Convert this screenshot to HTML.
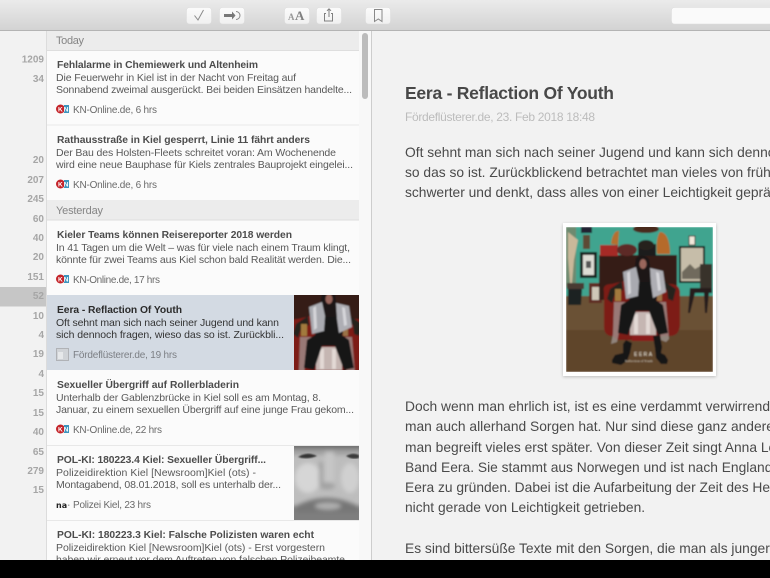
<!DOCTYPE html>
<html><head><meta charset="utf-8"><style>
html,body{margin:0;padding:0;width:770px;height:578px;overflow:hidden;background:#000}
svg{display:block}
text{font-family:"Liberation Sans",sans-serif;white-space:pre}
.n{font-size:10px;font-weight:bold;fill:#a6a6a6;text-anchor:end}
.h{font-size:11px;fill:#858585}
.t{font-size:10.300px;font-weight:bold;fill:#4c4c4c}
.d{font-size:10.500px;fill:#595959}
.s{font-size:10px;fill:#6a6a6a}
.b{font-size:13.800px;fill:#4a4a4a}
</style></head><body>
<svg width="770" height="578" viewBox="0 0 770 578" xmlns="http://www.w3.org/2000/svg">
<defs>
<linearGradient id="tb" x1="0" y1="0" x2="0" y2="1"><stop offset="0" stop-color="#ebebeb"/><stop offset="1" stop-color="#d3d3d3"/></linearGradient>
<linearGradient id="btn" x1="0" y1="0" x2="0" y2="1"><stop offset="0" stop-color="#fbfbfb"/><stop offset="1" stop-color="#f0f0f0"/></linearGradient>
<filter id="soft" x="-5%" y="-5%" width="110%" height="110%"><feGaussianBlur stdDeviation="0.8"/></filter>
<filter id="soft3" x="-30%" y="-30%" width="160%" height="160%"><feGaussianBlur stdDeviation="2"/></filter>
<filter id="sh" x="-10%" y="-10%" width="120%" height="120%"><feGaussianBlur stdDeviation="1.5"/></filter>
<clipPath id="c1"><rect x="294" y="295" width="65" height="75"/></clipPath>
<clipPath id="c2"><rect x="294" y="446" width="65" height="74"/></clipPath>
<clipPath id="c3"><rect x="566" y="227" width="147" height="145"/></clipPath>
<g id="album" filter="url(#soft)">
 <rect x="566" y="227" width="147" height="72" fill="#3fa48f"/>
 <rect x="566" y="296" width="147" height="76" fill="#6a5136"/>
 <rect x="566" y="330" width="147" height="42" fill="#5e452c"/>
 <rect x="566" y="227" width="10" height="60" fill="#6d8a70"/>
 <path d="M568 232 L578 240 L574 260 L572 283 L570 283 L568 258Z" fill="#c9b89a"/>
 <rect x="567" y="283" width="17" height="6" fill="#4a3b30"/>
 <path d="M568 289h14l-1 16h-13z" fill="#1c2421"/>
 <rect x="580" y="252" width="17" height="26" fill="#14201d"/><rect x="583" y="255" width="11" height="20" fill="#dcdcd4"/><rect x="586" y="261" width="5" height="7" fill="#555"/>
 <rect x="581" y="227" width="11" height="6" fill="#223"/>
 <rect x="583" y="235" width="7" height="14" fill="#5d4a35"/>
 <rect x="589" y="283" width="13" height="20" fill="#5f2a22"/><rect x="592" y="287" width="8" height="13" fill="#cfc7b8"/>
 <rect x="599" y="255" width="78" height="45" fill="#341a14"/>
 <rect x="600" y="245" width="18" height="11" fill="#a52a26"/>
 <ellipse cx="627" cy="250" rx="10" ry="6" fill="#5d2a25"/>
 <rect x="638" y="244" width="18" height="12" fill="#1e1d1b"/><ellipse cx="646" cy="245" rx="8" ry="5" fill="#26241f"/>
 <path d="M611 244c1-10 5-14 8-13l-1 14z" fill="#b5702e"/>
 <path d="M660 232c6 0 10 8 10 22h-13c-1-10 0-18 3-22z" fill="#b56a2c"/>
 <ellipse cx="646" cy="229" rx="13" ry="4" fill="#49291f"/>
 <rect x="689" y="236" width="6" height="9" fill="#f0e8da" stroke="#3b2a22"/>
 <rect x="679" y="246" width="26" height="37" fill="#18211e"/><rect x="681" y="248" width="22" height="33" fill="#c6bda9"/><path d="M682 272l8-8 5 5 7-4v14h-20z" fill="#6f6a5d"/>
 <path d="M690 288h22v5h-3l-2 20h-2l-1-20h-9l-5 20h-2z" fill="#261f1d"/>
 <rect x="700" y="264" width="12" height="24" fill="#39302a"/>
 <path d="M604 292q-2-8 8-8l12-3h30l16 3q10 0 10 9v30q0 13-10 13h-8l-4 4h-40l-6-4q-8 0-8-10z" fill="#7d1a18"/>
 <path d="M614 302l-1 32 -2 10 6-2 6-30 6-3h22l6 3 4 28 5 2 3-3-3-37z" fill="#a39a96" opacity=".75"/>
 <rect x="630" y="312" width="26" height="23" fill="#c5b6b2"/>
 <rect x="634" y="314" width="4" height="20" fill="#e2d8d4"/><rect x="646" y="314" width="4" height="20" fill="#e2d8d4"/>
 <rect x="632" y="335" width="24" height="6" fill="#8a1f1c"/>
 <path d="M622 281l-12 8 -3 10 5 4 3-9 8-4z" fill="#25201f"/>
 <path d="M664 281l12 8 -3 12 -5-2 -1-9-6-3z" fill="#25201f"/>
 <rect x="615" y="289" width="6" height="12" fill="#a27a3e"/><rect x="657" y="291" width="5" height="10" fill="#9a7246"/>
 <path d="M634 276h18l5 22 -1 2 7 5 5 28-10 2-9-24h-13l-8 24-10-2 3-28 8-5z" fill="#141212"/>
 <path d="M636 258q7-5 13 1l2 15-2 8h-12l-3-8z" fill="#1a1615"/>
 <ellipse cx="643" cy="264" rx="3.500" ry="5" fill="#9a665c"/>
 <path d="M623 272l13-5 3 14-1 15-12 3z" fill="#a9aab0"/>
 <path d="M627 273l3-2 1 22-3 2z" fill="#d4d4d8"/>
 <path d="M650 268l13 3 3 21-13 6-2-14z" fill="#aeaeb4"/>
 <path d="M656 272l3 1 2 17-3 1z" fill="#d6d6da"/>
 <path d="M626 340l-3 4v9l-8 2 -3 5v3l9 2 6-4 3-8 2-10z" fill="#131212"/>
 <path d="M660 335l2 12 -1 6 4 2 3 5 -1 4 -6 0 -5-6 -1-10-2-12z" fill="#131212"/>
 <text x="634" y="356" fill="#e8e0d0" style="font-size:5px;letter-spacing:1.5px">EERA</text>
 <text x="625" y="362" fill="#d8d0c0" style="font-size:3.500px;font-family:'Liberation Serif',serif">Reflection of Youth</text>
</g>
</defs>

<!-- base -->
<rect width="770" height="578" fill="#f2f2f2"/>
<!-- toolbar -->
<rect width="770" height="30" fill="url(#tb)"/>
<rect y="30" width="770" height="1" fill="#b4b4b4"/>
<g fill="url(#btn)" stroke="#dcdcdc" stroke-width=".5">
<rect x="186.500" y="7.500" width="25" height="16.500" rx="3"/>
<rect x="219.500" y="7.500" width="25" height="16.500" rx="3"/>
<rect x="284.500" y="7.500" width="25" height="16.500" rx="3"/>
<rect x="316.500" y="7.500" width="25" height="16.500" rx="3"/>
<rect x="365.500" y="7.500" width="25" height="16.500" rx="3"/>
<rect x="671.500" y="7.500" width="104" height="16.500" rx="3" fill="#fafafa"/>
</g>
<path d="M194.500 15.500l3.500 4.500 5.500-10" fill="none" stroke="#8a8a8a" stroke-width="1"/>
<path d="M224 14h8v-2.500l3.500 4 -3.500 4V17h-8z" fill="#777"/><path d="M236 11.500a4 4 0 0 1 0 8" fill="none" stroke="#8a8a8a" stroke-width="1"/>
<text x="288" y="20" style="font-size:9px;font-family:'Liberation Serif',serif;font-weight:bold" fill="#999">A</text>
<text x="295" y="20" style="font-size:13px;font-family:'Liberation Serif',serif;font-weight:bold" fill="#808080">A</text>
<path d="M326 13.500h-1.500v7.500h8v-7.500H331M329 17V9M327 10.800l2-2 2 2" fill="none" stroke="#808080" stroke-width="1"/>
<path d="M374.500 9.500h7.500v12l-3.700-2.500-3.800 2.500z" fill="none" stroke="#888" stroke-width="1"/>

<!-- sidebar -->
<rect y="31" width="47" height="529" fill="#f2f2f2"/>
<rect y="287" width="46" height="19.500" fill="#c6c6c6"/>
<g>
<text class="n" x="44" y="62.500">1209</text><text class="n" x="44" y="82">34</text>
<text class="n" x="44" y="163">20</text><text class="n" x="44" y="183">207</text><text class="n" x="44" y="202">245</text>
<text class="n" x="44" y="222">60</text><text class="n" x="44" y="241">40</text><text class="n" x="44" y="260">20</text>
<text class="n" x="44" y="280">151</text><text class="n" x="44" y="299">52</text><text class="n" x="44" y="319">10</text>
<text class="n" x="44" y="338">4</text><text class="n" x="44" y="357">19</text><text class="n" x="44" y="377">4</text>
<text class="n" x="44" y="396">15</text><text class="n" x="44" y="416">15</text><text class="n" x="44" y="435">40</text>
<text class="n" x="44" y="455">65</text><text class="n" x="44" y="474">279</text><text class="n" x="44" y="493">15</text>
</g>

<!-- list -->
<rect x="46" y="31" width="1" height="529" fill="#dcdcdc"/>
<rect x="47" y="31" width="324" height="529" fill="#fbfbfb"/>
<rect x="359" y="31" width="12" height="529" fill="#f8f8f8"/>
<rect x="371" y="31" width="1" height="529" fill="#cdcdcd"/>
<rect x="362" y="33" width="6" height="66" rx="3" fill="#bcbcbc"/>

<rect x="47" y="31" width="312" height="19" fill="#ececec"/>
<rect x="47" y="50" width="312" height="1" fill="#dedede"/>
<text class="h" x="56" y="44" textLength="28">Today</text>
<rect x="47" y="200" width="312" height="19.500" fill="#ececec"/>
<rect x="47" y="219.500" width="312" height="1" fill="#dedede"/>
<text class="h" x="56" y="214" textLength="47">Yesterday</text>
<rect x="47" y="124.500" width="312" height="1" fill="#e8e8e8"/>
<rect x="47" y="445" width="312" height="1" fill="#e8e8e8"/>
<rect x="47" y="520" width="312" height="1" fill="#e8e8e8"/>
<rect x="47" y="295" width="312" height="75" fill="#d3dae3"/>

<text class="t" x="57" y="68" textLength="201">Fehlalarme in Chemiewerk und Altenheim</text>
<text class="d" x="56" y="81" textLength="240">Die Feuerwehr in Kiel ist in der Nacht von Freitag auf</text>
<text class="d" x="56" y="93" textLength="296">Sonnabend zweimal ausgerückt. Bei beiden Einsätzen handelte...</text>
<text class="s" x="73" y="113" textLength="84">KN-Online.de, 6 hrs</text>

<text class="t" x="57" y="143" textLength="253">Rathausstraße in Kiel gesperrt, Linie 11 fährt anders</text>
<text class="d" x="56" y="156" textLength="280">Der Bau des Holsten-Fleets schreitet voran: Am Wochenende</text>
<text class="d" x="56" y="168" textLength="297">wird eine neue Bauphase für Kiels zentrales Bauprojekt eingelei...</text>
<text class="s" x="73" y="188" textLength="84">KN-Online.de, 6 hrs</text>

<text class="t" x="57" y="238" textLength="235">Kieler Teams können Reisereporter 2018 werden</text>
<text class="d" x="56" y="251" textLength="294">In 41 Tagen um die Welt – was für viele nach einem Traum klingt,</text>
<text class="d" x="56" y="263" textLength="295">könnte für zwei Teams aus Kiel schon bald Realität werden. Die...</text>
<text class="s" x="73" y="283" textLength="87">KN-Online.de, 17 hrs</text>

<text class="t" x="57" y="313" textLength="125" style="fill:#2b2b2b">Eera - Reflaction Of Youth</text>
<text class="d" x="56" y="326" textLength="223" style="fill:#333">Oft sehnt man sich nach seiner Jugend und kann</text>
<text class="d" x="56" y="338" textLength="228" style="fill:#333">sich dennoch fragen, wieso das so ist. Zurückbli...</text>
<text class="s" x="73" y="358" textLength="104" style="fill:#7c7f84">Fördeflüsterer.de, 19 hrs</text>
<rect x="56.500" y="348.500" width="12" height="12" fill="#d0d3d7" stroke="#b0b2b6"/>
<rect x="58" y="352" width="5" height="7" fill="#e6e8ea"/>

<text class="t" x="57" y="388" textLength="182">Sexueller Übergriff auf Rollerbladerin</text>
<text class="d" x="56" y="401" textLength="265">Unterhalb der Gablenzbrücke in Kiel soll es am Montag, 8.</text>
<text class="d" x="56" y="413" textLength="298">Januar, zu einem sexuellen Übergriff auf eine junge Frau gekom...</text>
<text class="s" x="73" y="433" textLength="89">KN-Online.de, 22 hrs</text>

<text class="t" x="57" y="463" textLength="209">POL-KI: 180223.4 Kiel: Sexueller Übergriff...</text>
<text class="d" x="56" y="476" textLength="200">Polizeidirektion Kiel [Newsroom]Kiel (ots) -</text>
<text class="d" x="56" y="488" textLength="225">Montagabend, 08.01.2018, soll es unterhalb der...</text>
<text class="s" x="73" y="508" textLength="78">Polizei Kiel, 23 hrs</text>
<text x="56" y="508" style="font-size:8px;font-weight:bold;font-family:'DejaVu Sans',sans-serif" fill="#222">na<tspan fill="#aaa">·</tspan></text>

<text class="t" x="57" y="538" textLength="257">POL-KI: 180223.3 Kiel: Falsche Polizisten waren echt</text>
<text class="d" x="56" y="551" textLength="269">Polizeidirektion Kiel [Newsroom]Kiel (ots) - Erst vorgestern</text>
<text class="d" x="56" y="563" textLength="289">haben wir erneut vor dem Auftreten von falschen Polizeibeamte</text>

<!-- KN icons -->
<g style="font-size:6.500px;font-weight:bold">
<g><circle cx="60.500" cy="109" r="4.500" fill="#c4242a"/><rect x="64" y="105" width="5" height="8" fill="#3d94bd"/><text x="58" y="111.500" style="font-size:6.500px;font-weight:bold" fill="#fff">K</text><text x="63.800" y="111.500" style="font-size:6.500px;font-weight:bold" fill="#fff">N</text></g>
<g><circle cx="60.500" cy="184" r="4.500" fill="#c4242a"/><rect x="64" y="180" width="5" height="8" fill="#3d94bd"/><text x="58" y="186.500" style="font-size:6.500px;font-weight:bold" fill="#fff">K</text><text x="63.800" y="186.500" style="font-size:6.500px;font-weight:bold" fill="#fff">N</text></g>
<g><circle cx="60.500" cy="279" r="4.500" fill="#c4242a"/><rect x="64" y="275" width="5" height="8" fill="#3d94bd"/><text x="58" y="281.500" style="font-size:6.500px;font-weight:bold" fill="#fff">K</text><text x="63.800" y="281.500" style="font-size:6.500px;font-weight:bold" fill="#fff">N</text></g>
<g><circle cx="60.500" cy="429" r="4.500" fill="#c4242a"/><rect x="64" y="425" width="5" height="8" fill="#3d94bd"/><text x="58" y="431.500" style="font-size:6.500px;font-weight:bold" fill="#fff">K</text><text x="63.800" y="431.500" style="font-size:6.500px;font-weight:bold" fill="#fff">N</text></g>
</g>

<!-- thumb 1 -->
<g clip-path="url(#c1)"><rect x="294" y="295" width="65" height="75" fill="#6b1f1a"/><use href="#album" transform="translate(-314 35)"/></g>

<!-- thumb 2: face -->
<g clip-path="url(#c2)">
<rect x="294" y="446" width="65" height="74" fill="#bdbdbd"/>
<g filter="url(#soft3)">
<rect x="290" y="442" width="73" height="7" fill="#6e6e6e"/>
<rect x="290" y="449" width="73" height="6" fill="#a0a0a0"/>
<ellipse cx="308" cy="478" rx="13" ry="15" fill="#d6d6d6"/>
<ellipse cx="350" cy="478" rx="9" ry="15" fill="#d0d0d0"/>
<rect x="319" y="462" width="4" height="22" fill="#a2a2a2"/>
<rect x="325" y="452" width="9" height="30" fill="#c6c6c6"/>
<ellipse cx="327" cy="486" rx="8" ry="3.500" fill="#a2a2a2"/>
<rect x="290" y="506" width="73" height="18" fill="#7e7e7e"/>
<path d="M296 506q30-16 62 0v6H296z" fill="#767676"/>
<ellipse cx="328" cy="506" rx="13" ry="3.500" fill="#b0b0b0"/>
</g>
<g filter="url(#soft)">
<path d="M298 457q9-6 19-1q-10 4-19 1z" fill="#363636"/>
<path d="M346 456q7-4 13-1v3q-7 2-13-2z" fill="#3a3a3a"/>
</g>
</g>

<!-- article -->
<text x="405" y="99" textLength="209" style="font-size:17.500px;font-weight:bold" fill="#484848">Eera - Reflaction Of Youth</text>
<text x="405" y="121" textLength="190" style="font-size:12px" fill="#bcbcbc">Fördeflüsterer.de, 23. Feb 2018 18:48</text>
<text class="b" x="405" y="157">Oft sehnt man sich nach seiner Jugend und kann sich dennoch</text>
<text class="b" x="405" y="177">so das so ist. Zurückblickend betrachtet man vieles von früher</text>
<text class="b" x="405" y="197">schwerter und denkt, dass alles von einer Leichtigkeit geprägt</text>

<rect x="563" y="224" width="153" height="153" fill="#000" opacity=".22" filter="url(#sh)"/>
<rect x="563" y="223" width="153" height="153" fill="#fff"/>
<g clip-path="url(#c3)"><use href="#album"/></g>

<text class="b" x="405" y="411">Doch wenn man ehrlich ist, ist es eine verdammt verwirrende</text>
<text class="b" x="405" y="431">man auch allerhand Sorgen hat. Nur sind diese ganz anderer</text>
<text class="b" x="405" y="452">man begreift vieles erst später. Von dieser Zeit singt Anna Lena</text>
<text class="b" x="405" y="472">Band Eera. Sie stammt aus Norwegen und ist nach England</text>
<text class="b" x="405" y="492">Eera zu gründen. Dabei ist die Aufarbeitung der Zeit des Heran</text>
<text class="b" x="405" y="512">nicht gerade von Leichtigkeit getrieben.</text>
<text class="b" x="405" y="553">Es sind bittersüße Texte mit den Sorgen, die man als junger</text>

<!-- bottom black -->
<rect x="0" y="560" width="770" height="18" fill="#000"/>
</svg>
</body></html>
